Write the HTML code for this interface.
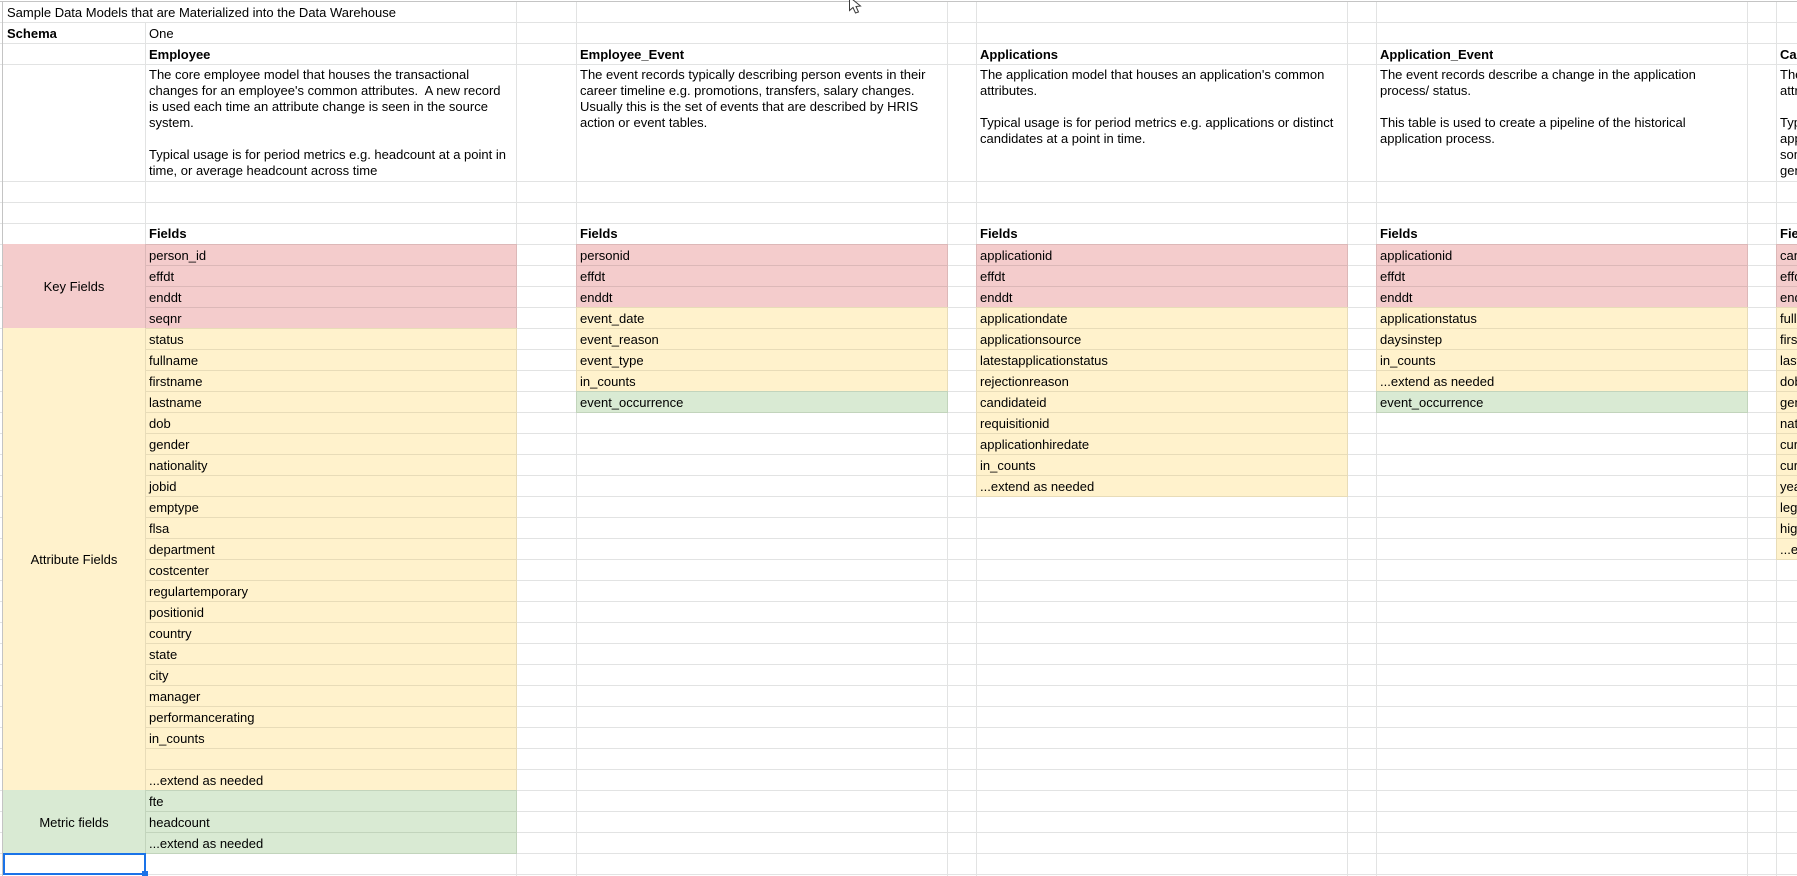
<!DOCTYPE html>
<html lang="en"><head><meta charset="utf-8"><title>Sample Data Models</title>
<style>
html,body{margin:0;padding:0;background:#fff;width:1797px;height:876px;overflow:hidden}
body{position:relative;font:13px/20px "Liberation Sans",Arial,sans-serif;color:#000}
div{box-sizing:border-box}
.a{position:absolute}
.v{position:absolute;width:1px;background:#e2e3e3;bottom:0;top:1px}
.h{position:absolute;height:1px;background:#e2e3e3;left:0;right:0}
.rows{position:absolute;left:0;right:0;top:244px;bottom:0;background:repeating-linear-gradient(to bottom,#e2e3e3 0,#e2e3e3 1px,transparent 1px,transparent 21px)}
.t{position:absolute;height:20px;white-space:nowrap;overflow:hidden}
.b{font-weight:bold}
.d{position:absolute;top:67px;line-height:16px;white-space:nowrap;overflow:hidden;height:114px}
.c{position:absolute;top:244px;width:372px}
.r{height:21px;padding:1px 0 0 3px;border-left:1px solid;border-right:1px solid;border-top:1px solid;white-space:nowrap;overflow:hidden}
.p{background:#f4cccc;border-color:#dcb8b8}
.y{background:#fff2cc;border-color:#e8dcb8}
.g{background:#d9ead3;border-color:#c2d4bc}
.z{height:22px;border-bottom-width:1px;border-bottom-style:solid}
.m{position:absolute;left:3px;width:142px;display:flex;align-items:center;justify-content:center;padding-top:2px}
</style></head><body>
<div class="rows"></div>
<div class="h" style="top:22px"></div><div class="h" style="top:43px"></div><div class="h" style="top:64px"></div><div class="h" style="top:181px"></div><div class="h" style="top:202px"></div><div class="h" style="top:223px"></div>
<div class="v" style="left:145px;top:22px"></div><div class="v" style="left:516px"></div><div class="v" style="left:576px"></div><div class="v" style="left:947px"></div><div class="v" style="left:976px"></div><div class="v" style="left:1347px"></div><div class="v" style="left:1376px"></div><div class="v" style="left:1747px"></div><div class="v" style="left:1776px"></div>

<div class="a" style="left:0;right:0;top:1px;height:1px;background:#c4c4c4"></div>
<div class="a" style="left:2px;top:1px;bottom:0;width:1px;background:#c4c4c4"></div>

<div class="t" style="left:7px;top:3px">Sample Data Models that are Materialized into the Data Warehouse</div>
<div class="t b" style="left:7px;top:24px">Schema</div>
<div class="t" style="left:149px;top:24px">One</div>
<div class="t b" style="left:149px;top:45px">Employee</div>
<div class="t b" style="left:580px;top:45px">Employee_Event</div>
<div class="t b" style="left:980px;top:45px">Applications</div>
<div class="t b" style="left:1380px;top:45px">Application_Event</div>
<div class="t b" style="left:1780px;top:45px;width:17px">Candidate</div>

<div class="d" style="left:149px;width:366px">The core employee model that houses the transactional<br>changes for an employee's common attributes.&nbsp; A new record<br>is used each time an attribute change is seen in the source<br>system.<br><br>Typical usage is for period metrics e.g. headcount at a point in<br>time, or average headcount across time</div>
<div class="d" style="left:580px;width:366px">The event records typically describing person events in their<br>career timeline e.g. promotions, transfers, salary changes.<br>Usually this is the set of events that are described by HRIS<br>action or event tables.</div>
<div class="d" style="left:980px;width:366px">The application model that houses an application's common<br>attributes.<br><br>Typical usage is for period metrics e.g. applications or distinct<br>candidates at a point in time.</div>
<div class="d" style="left:1380px;width:366px">The event records describe a change in the application<br>process/ status.<br><br>This table is used to create a pipeline of the historical<br>application process.</div>
<div class="d" style="left:1780px;width:17px">The candidate<br>attributes<br><br>Typical usage<br>applications<br>some<br>general</div>

<div class="t b" style="left:149px;top:224px">Fields</div>
<div class="t b" style="left:580px;top:224px">Fields</div>
<div class="t b" style="left:980px;top:224px">Fields</div>
<div class="t b" style="left:1380px;top:224px">Fields</div>
<div class="t b" style="left:1780px;top:224px;width:17px">Fields</div>

<div class="m p" style="top:244px;height:84px">Key Fields</div>
<div class="m y" style="top:328px;height:462px">Attribute Fields</div>
<div class="m g" style="top:790px;height:63px">Metric fields</div>

<div class="c" style="left:145px">
<div class="r p">person_id</div><div class="r p">effdt</div><div class="r p">enddt</div><div class="r p">seqnr</div>
<div class="r y">status</div><div class="r y">fullname</div><div class="r y">firstname</div><div class="r y">lastname</div><div class="r y">dob</div><div class="r y">gender</div><div class="r y">nationality</div><div class="r y">jobid</div><div class="r y">emptype</div><div class="r y">flsa</div><div class="r y">department</div><div class="r y">costcenter</div><div class="r y">regulartemporary</div><div class="r y">positionid</div><div class="r y">country</div><div class="r y">state</div><div class="r y">city</div><div class="r y">manager</div><div class="r y">performancerating</div><div class="r y">in_counts</div><div class="r y"></div><div class="r y">...extend as needed</div>
<div class="r g">fte</div><div class="r g">headcount</div><div class="r g z">...extend as needed</div>
</div>

<div class="c" style="left:576px">
<div class="r p">personid</div><div class="r p">effdt</div><div class="r p">enddt</div>
<div class="r y">event_date</div><div class="r y">event_reason</div><div class="r y">event_type</div><div class="r y">in_counts</div>
<div class="r g z">event_occurrence</div>
</div>

<div class="c" style="left:976px">
<div class="r p">applicationid</div><div class="r p">effdt</div><div class="r p">enddt</div>
<div class="r y">applicationdate</div><div class="r y">applicationsource</div><div class="r y">latestapplicationstatus</div><div class="r y">rejectionreason</div><div class="r y">candidateid</div><div class="r y">requisitionid</div><div class="r y">applicationhiredate</div><div class="r y">in_counts</div><div class="r y z">...extend as needed</div>
</div>

<div class="c" style="left:1376px">
<div class="r p">applicationid</div><div class="r p">effdt</div><div class="r p">enddt</div>
<div class="r y">applicationstatus</div><div class="r y">daysinstep</div><div class="r y">in_counts</div><div class="r y">...extend as needed</div>
<div class="r g z">event_occurrence</div>
</div>

<div class="c" style="left:1776px;width:21px;overflow:hidden">
<div class="r p" style="width:372px">candidateid</div><div class="r p" style="width:372px">effdt</div><div class="r p" style="width:372px">enddt</div>
<div class="r y" style="width:372px">fullname</div><div class="r y" style="width:372px">firstname</div><div class="r y" style="width:372px">lastname</div><div class="r y" style="width:372px">dob</div><div class="r y" style="width:372px">gender</div><div class="r y" style="width:372px">nationality</div><div class="r y" style="width:372px">current</div><div class="r y" style="width:372px">current</div><div class="r y" style="width:372px">years</div><div class="r y" style="width:372px">legal</div><div class="r y" style="width:372px">highest</div><div class="r y z" style="width:372px">...extend</div>
</div>

<div class="a" style="left:3px;top:853px;width:143px;height:22px;border:2px solid #1a73e8;background:#fff"></div>
<div class="a" style="left:142px;top:871px;width:6px;height:5px;background:#1a73e8"></div>

<svg class="a" style="left:845px;top:0" width="20" height="16" viewBox="0 0 20 16"><path d="M4.5 -3 L4.5 10.5 L8 7.5 L10.5 13 L13.5 12 L11 6.5 L15.5 6 Z" fill="#fff" stroke="#3a3a3a" stroke-width="1"/></svg>
</body></html>
